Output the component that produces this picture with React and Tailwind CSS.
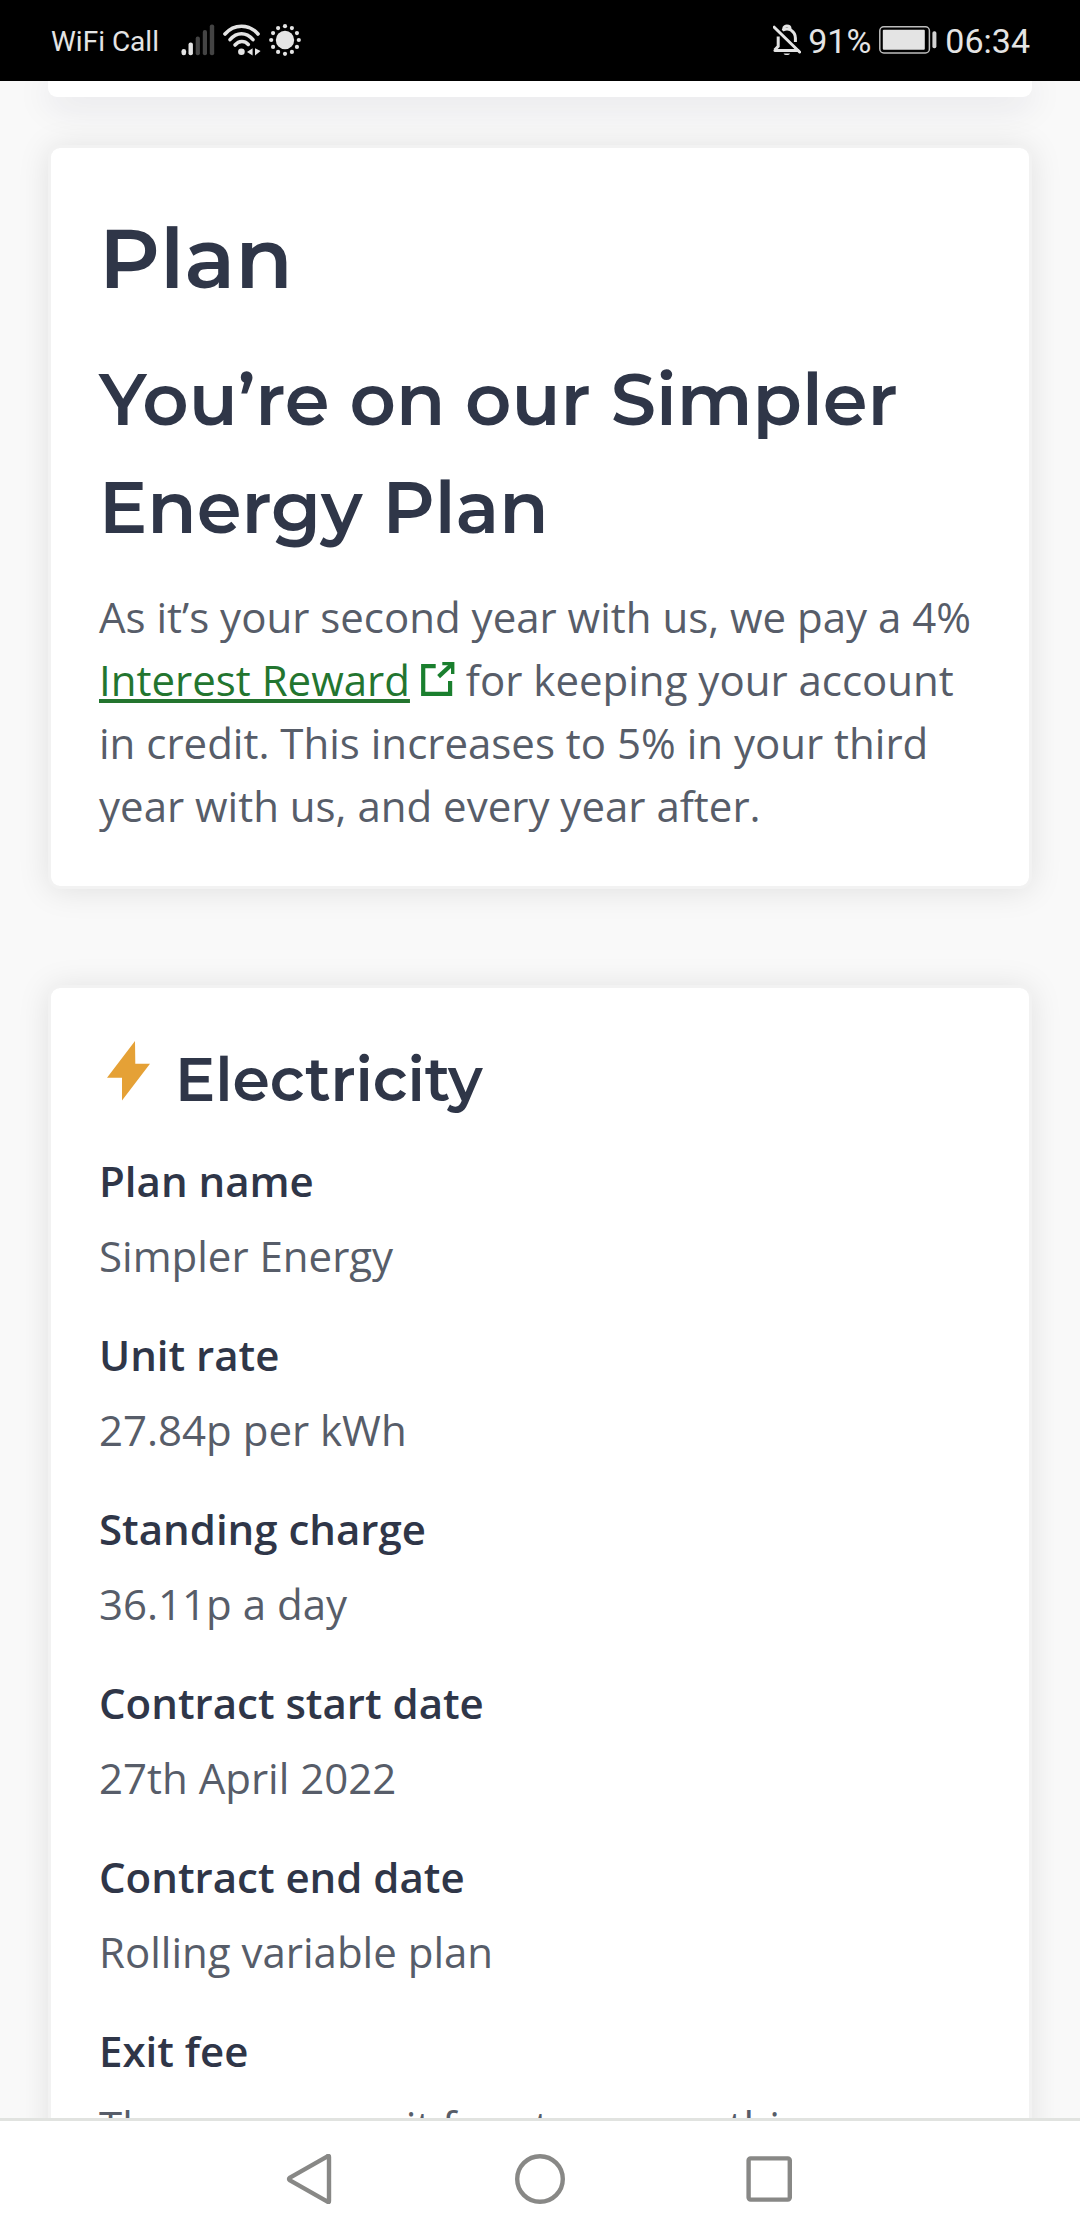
const HEADING = "font-['Montserrat',sans-serif] font-semibold text-[#2f3648]";

const details = [
  ["Plan name", "Simpler Energy"],
  ["Unit rate", "27.84p per kWh"],
  ["Standing charge", "36.11p a day"],
  ["Contract start date", "27th April 2022"],
  ["Contract end date", "Rolling variable plan"],
  ["Exit fee", "There are no exit fees to pay on this"],
];

function SignalIcon() {
  return (
    <svg width="34" height="32" viewBox="0 0 34 32" aria-hidden="true">
      <g fill="#e4e4e4">
        <rect x="0.5" y="25" width="4.6" height="6.2" rx="2.2" />
        <rect x="7.5" y="18.6" width="4.4" height="12.6" rx="2" />
      </g>
      <g fill="#444">
        <rect x="14.7" y="12.4" width="4.2" height="18.8" rx="2" />
        <rect x="21.8" y="6" width="4.2" height="25.2" rx="2" />
        <rect x="28.8" y="0.4" width="4.4" height="30.8" rx="2" />
      </g>
    </svg>
  );
}

function WifiIcon() {
  return (
    <svg width="38" height="32" viewBox="0 0 38 32" fill="none" aria-hidden="true">
      <g stroke="#e4e4e4" strokeWidth="3.6" strokeLinecap="round">
        <path d="M2 10 C11 -0.4 26 -0.4 35 10" />
        <path d="M7 15.6 C14 7.8 23 7.8 30 15.6" />
        <path d="M12 21 C16 16.4 21.5 16.4 25.3 20.4" />
      </g>
      <circle cx="18.4" cy="27.8" r="3.3" fill="#e4e4e4" />
      <path d="M29.6 24.2V31.6L24 27.9ZM32 24.2V31.6L37.6 27Z" fill="#e4e4e4" />
    </svg>
  );
}

function SunIcon() {
  const dots = Array.from({ length: 12 }, (_, i) => (i * Math.PI) / 6);
  return (
    <svg width="32" height="32" viewBox="0 0 32 32" fill="#e4e4e4" aria-hidden="true">
      <circle cx="16" cy="16" r="9.2" />
      {dots.map((a) => (
        <circle key={a} cx={16 + 13.8 * Math.cos(a)} cy={16 + 13.8 * Math.sin(a)} r="2.1" />
      ))}
    </svg>
  );
}

function BellOffIcon() {
  return (
    <svg width="28" height="32" viewBox="0 0 28 32" fill="none" aria-hidden="true">
      <g stroke="#e4e4e4" strokeWidth="3">
        <path d="M2 26.6H25" strokeLinecap="round" />
        <path d="M1.6 26 5.2 22.4V12.5" />
        <path d="M9.6 6.4C12 4.6 16 4.6 18.4 6.4C21 8.2 22.4 10.6 22.4 14V18" />
        <path d="M10.8 6.4V4.6C10.8 1.2 17 1.2 17 4.6V6.4" />
        <path d="M1.2 3.2 26.6 28" strokeLinecap="round" />
      </g>
      <path d="M10.6 29.4H17C16.4 31.6 11.2 31.6 10.6 29.4Z" fill="#e4e4e4" />
    </svg>
  );
}

function BatteryIcon() {
  return (
    <svg width="58" height="28" viewBox="0 0 58 28" aria-hidden="true">
      <rect x="0.8" y="0.8" width="49.6" height="26.2" rx="4" fill="none" stroke="#bdbdbd" strokeWidth="1.5" />
      <rect x="3.8" y="3.8" width="42" height="20" rx="1" fill="#e4e4e4" />
      <rect x="53.4" y="5.2" width="4" height="17" rx="1.8" fill="#d2d2d2" />
    </svg>
  );
}

function ExternalLinkIcon() {
  return (
    <svg
      className="ml-[11px] inline-block align-baseline"
      width="34"
      height="34"
      viewBox="0 0 34 34"
      fill="none"
      stroke="#1a7f2e"
      aria-hidden="true"
    >
      <path d="M14.7 4.1H2.2V31.9H29.1V19" strokeWidth="4.2" />
      <path d="M21.3 1.6H31.7V12" strokeWidth="3.4" />
      <path d="M17.6 14.6 31 2.2" strokeWidth="4.2" />
    </svg>
  );
}

function BoltIcon() {
  return (
    <svg className="mt-1.5" width="44" height="60" viewBox="0 0 44 60" aria-hidden="true">
      <path d="M28 0L28.3 22.7H43L15 59.6V36.7H0Z" fill="#e5a136" />
    </svg>
  );
}

function Card({ className, children }) {
  return (
    <section
      className={
        "rounded-xl border-[3px] border-[#f2f2f2] bg-white bg-clip-padding px-12 pb-[49px] pt-[47px] shadow-[0_2px_32px_rgba(0,0,0,0.1)] " +
        className
      }
    >
      {children}
    </section>
  );
}

export default function App() {
  return (
    <div className="flex h-screen flex-col overflow-hidden bg-[#f9f9f9] font-['Open_Sans',sans-serif]">
      <header className="z-10 flex h-[81px] shrink-0 items-center justify-between bg-black pb-0.5 pl-[51px] pr-[50px] font-['Roboto',sans-serif] text-[#e4e4e4]">
        <div className="flex items-center">
          <span className="mr-[22px] pt-1 text-[28px]">WiFi Call</span>
          <SignalIcon />
          <span className="ml-2 mr-2 flex">
            <WifiIcon />
          </span>
          <SunIcon />
        </div>
        <div className="flex items-center text-[34px]">
          <BellOffIcon />
          <span className="ml-[7px] mr-2 pt-1">91%</span>
          <BatteryIcon />
          <span className="ml-2 pt-1">06:34</span>
        </div>
      </header>

      <main className="min-h-0 flex-1 overflow-hidden px-12">
        <div className="h-4 rounded-b-[9px] bg-white shadow-[0_6px_36px_rgba(30,30,70,0.14)]" />

        <Card className="mt-12">
          <h1 className={HEADING + " text-[84px] leading-[126px]"}>Plan</h1>
          <h2 className={HEADING + " mt-6 text-[72px] leading-[108px]"}>You’re on our Simpler Energy Plan</h2>
          <p className="mt-6 text-[42px] leading-[63px] text-[#575d69]">
            As it’s your second year with us, we pay a 4%{" "}
            <a
              href="#interest-reward"
              className="text-[#23752f] underline decoration-[4px] underline-offset-[3px] [text-decoration-skip-ink:none]"
            >
              Interest Reward
            </a>
            <ExternalLinkIcon /> for keeping your account in credit. This increases to 5% in your third year with us,
            and every year after.
          </p>
        </Card>

        <Card className="mt-24">
          <div className="flex items-start pl-2">
            <BoltIcon />
            <h2 className={HEADING + " ml-6 text-[60px] leading-[90px]"}>Electricity</h2>
          </div>
          <dl className="mt-6 text-[42px] leading-[63px]">
            {details.map(([term, value]) => (
              <div key={term} className="mb-9">
                <dt className="font-semibold text-[#2f3648]">{term}</dt>
                <dd className="mt-3 text-[#575d69]">{value}</dd>
              </div>
            ))}
          </dl>
        </Card>
      </main>

      <nav
        aria-label="System navigation"
        className="z-10 flex h-[122px] shrink-0 justify-center border-t-[3px] border-[#e1e3e0] bg-white pb-[3px]"
      >
        <button type="button" aria-label="Back" className="flex w-[230px] items-center justify-center">
          <svg width="50" height="50" viewBox="0 0 50 50" fill="none" stroke="#888886" strokeWidth="4.4" strokeLinejoin="round">
            <path d="M44 3V47Q44 49 42 47.4L5 26.4Q3 25 5 23.6L42 2.6Q44 1 44 3Z" />
          </svg>
        </button>
        <button type="button" aria-label="Home" className="flex w-[230px] items-center justify-center">
          <svg width="50" height="50" viewBox="0 0 50 50" fill="none" stroke="#888886" strokeWidth="4.4">
            <circle cx="25" cy="25" r="22.8" />
          </svg>
        </button>
        <button type="button" aria-label="Recent apps" className="flex w-[230px] items-center justify-center">
          <svg width="50" height="50" viewBox="0 0 50 50" fill="none" stroke="#888886" strokeWidth="4.4">
            <rect x="3.6" y="4.4" width="41.2" height="41.2" rx="2" />
          </svg>
        </button>
      </nav>
    </div>
  );
}
